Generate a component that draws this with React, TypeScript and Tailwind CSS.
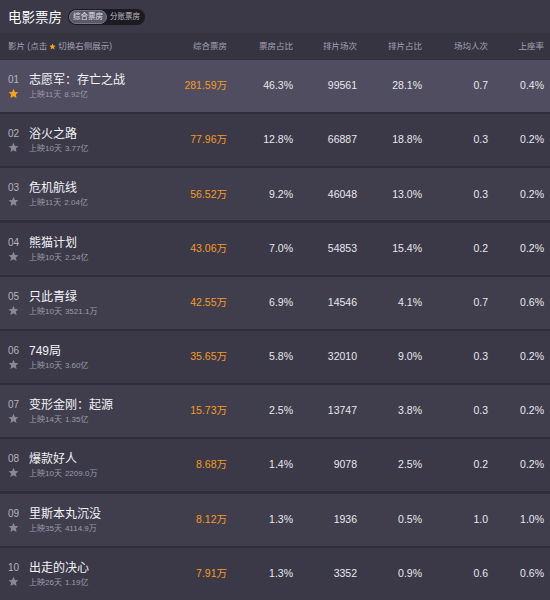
import React from "react";

type Movie = {
  rank: string;
  name: string;
  days: string;
  total: string;
  box: string;
  boxRate: string;
  shows: string;
  showRate: string;
  avg: string;
  seat: string;
};

const movies: Movie[] = [
  { rank: "01", name: "志愿军：存亡之战", days: "上映11天", total: "8.92亿", box: "281.59万", boxRate: "46.3%", shows: "99561", showRate: "28.1%", avg: "0.7", seat: "0.4%" },
  { rank: "02", name: "浴火之路", days: "上映10天", total: "3.77亿", box: "77.96万", boxRate: "12.8%", shows: "66887", showRate: "18.8%", avg: "0.3", seat: "0.2%" },
  { rank: "03", name: "危机航线", days: "上映11天", total: "2.04亿", box: "56.52万", boxRate: "9.2%", shows: "46048", showRate: "13.0%", avg: "0.3", seat: "0.2%" },
  { rank: "04", name: "熊猫计划", days: "上映10天", total: "2.24亿", box: "43.06万", boxRate: "7.0%", shows: "54853", showRate: "15.4%", avg: "0.2", seat: "0.2%" },
  { rank: "05", name: "只此青绿", days: "上映10天", total: "3521.1万", box: "42.55万", boxRate: "6.9%", shows: "14546", showRate: "4.1%", avg: "0.7", seat: "0.6%" },
  { rank: "06", name: "749局", days: "上映10天", total: "3.60亿", box: "35.65万", boxRate: "5.8%", shows: "32010", showRate: "9.0%", avg: "0.3", seat: "0.2%" },
  { rank: "07", name: "变形金刚：起源", days: "上映14天", total: "1.35亿", box: "15.73万", boxRate: "2.5%", shows: "13747", showRate: "3.8%", avg: "0.3", seat: "0.2%" },
  { rank: "08", name: "爆款好人", days: "上映10天", total: "2209.0万", box: "8.68万", boxRate: "1.4%", shows: "9078", showRate: "2.5%", avg: "0.2", seat: "0.2%" },
  { rank: "09", name: "里斯本丸沉没", days: "上映35天", total: "4114.9万", box: "8.12万", boxRate: "1.3%", shows: "1936", showRate: "0.5%", avg: "1.0", seat: "1.0%" },
  { rank: "10", name: "出走的决心", days: "上映26天", total: "1.19亿", box: "7.91万", boxRate: "1.3%", shows: "3352", showRate: "0.9%", avg: "0.6", seat: "0.6%" },
];

function Star({ active, size = 11 }: { active?: boolean; size?: number }) {
  return (
    <svg width={size} height={size} viewBox="0 0 24 24">
      <polygon
        points="12,1.5 15.1,8.6 22.8,9.3 17,14.4 18.7,22 12,18 5.3,22 7,14.4 1.2,9.3 8.9,8.6"
        fill={active ? "#f7a21b" : "#8a8896"}
      />
    </svg>
  );
}

const cols = "grid grid-cols-[162px_65px_66px_64px_65px_66px_56px]";

export default function App() {
  return (
    <div
      className="w-[550px] h-[600px] overflow-hidden bg-[#3b3947] text-[#e8e7ee]"
      style={{ fontFamily: '"Liberation Sans", "Noto Sans CJK SC", sans-serif' }}
    >
      <div className="h-[33px] flex items-center pl-2">
        <span className="text-[13.5px] text-white" style={{ fontFamily: '"Noto Sans CJK SC", sans-serif' }}>
          电影票房
        </span>
        <div className="ml-[6px] flex items-center h-[16px] rounded-full bg-[#1c1b22] p-[1px] pr-[5px] text-[7.5px]">
          <span className="h-[14px] px-[3px] flex items-center rounded-full bg-[#5a5868] border border-[#77758a] text-[#e2e1e8]">
            综合票房
          </span>
          <span className="ml-[3px] text-[#bdbcc6]">分账票房</span>
        </div>
      </div>
      <div className={`${cols} h-[26px] items-center bg-[#363441] text-[8.5px] text-[#a3a1b1]`}>
        <div className="pl-2 flex items-center">
          影片 (点击
          <span className="mx-[2px] inline-flex">
            <Star active size={7} />
          </span>
          切换右侧展示)
        </div>
        <div className="text-right">综合票房</div>
        <div className="text-right">票房占比</div>
        <div className="text-right">排片场次</div>
        <div className="text-right">排片占比</div>
        <div className="text-right">场均人次</div>
        <div className="text-right">上座率</div>
      </div>
      <div className="flex flex-col bg-[#302e3a] pt-[1px]">
        {movies.map((m, i) => (
          <div
            key={m.rank}
            className={`${cols} h-[52px] mb-[2.2px] items-center text-[10.5px] ${
              i === 0 ? "bg-[#4f4d5f]" : i % 2 === 0 ? "bg-[#403e4d]" : "bg-[#3b3948]"
            }`}
          >
            <div className="flex items-start pl-2 pt-[1px]">
              <div className="w-[21px] flex flex-col items-start">
                <span className="text-[10px] text-[#b4b2bf] leading-[13px] mt-[1px]">{m.rank}</span>
                <span className="mt-[2px]">
                  <Star active={i === 0} />
                </span>
              </div>
              <div className="flex flex-col">
                <span className="text-[12px] text-[#f2f1f6] leading-[16px]">{m.name}</span>
                <span className="text-[8px] text-[#9c9aa9] leading-[12px] mt-[1px]">
                  {m.days}
                  <span className="ml-[3px]">{m.total}</span>
                </span>
              </div>
            </div>
            <div className="text-right text-[10.5px] text-[#f39a24]">{m.box}</div>
            <div className="text-right">{m.boxRate}</div>
            <div className="text-right">{m.shows}</div>
            <div className="text-right">{m.showRate}</div>
            <div className="text-right">{m.avg}</div>
            <div className="text-right">{m.seat}</div>
          </div>
        ))}
      </div>
    </div>
  );
}
